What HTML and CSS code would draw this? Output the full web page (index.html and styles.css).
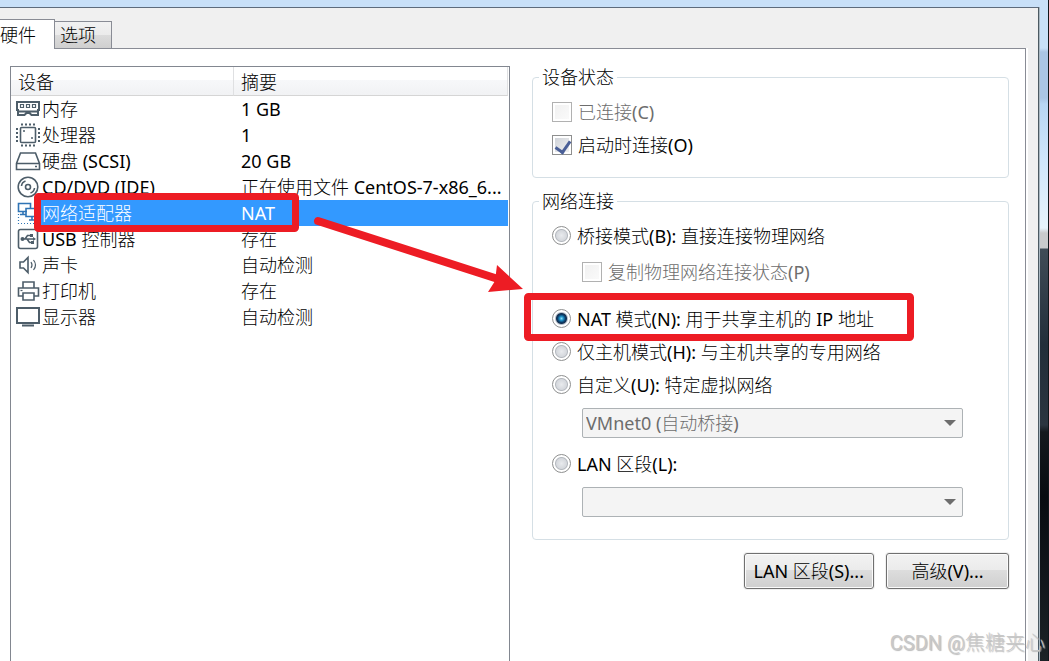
FILE: index.html
```html
<!DOCTYPE html>
<html lang="zh-CN">
<head>
    <meta charset="UTF-8">
    <meta name="viewport" content="width=device-width, initial-scale=1.0">
    <title>虚拟机设置</title>
    <link rel="stylesheet" href="styles.css">
</head>
<body>
    <div class="dialog">
        <div class="tabs" role="tablist">
            <button type="button" class="tab active" role="tab">硬件</button>
            <button type="button" class="tab" role="tab">选项</button>
        </div>

        <div class="panel">
            <div class="device-list">
                <table class="devices">
                    <colgroup>
                        <col class="col-icon">
                        <col class="col-name">
                        <col>
                    </colgroup>
                    <thead>
                        <tr>
                            <th colspan="2">设备</th>
                            <th>摘要</th>
                        </tr>
                    </thead>
                    <tbody>
                        <tr>
                            <td class="icon">
                                <svg width="26" height="26" viewBox="0 0 26 26">
                                    <path d="M2 6h22v8h-1v5h-6.500l-2-2h-3l-2 2H3v-5H2zM3 15.500h20" />
                                    <path class="thin" d="M5.500 8.500h3v3h-3zM11.500 8.500h3v3h-3zM17.500 8.500h3v3h-3z" />
                                </svg>
                            </td>
                            <td>内存</td>
                            <td>1 GB</td>
                        </tr>
                        <tr>
                            <td class="icon">
                                <svg width="26" height="26" viewBox="0 0 26 26">
                                    <rect class="mid" x="5.500" y="5.500" width="15" height="15" rx="1" />
                                    <path stroke-dasharray="2 2" d="M6 2.500h14M6 23.500h14M2 6v14M24 6v14" />
                                    <path class="mid" d="M8 9h2M16 16h2" />
                                </svg>
                            </td>
                            <td>处理器</td>
                            <td>1</td>
                        </tr>
                        <tr>
                            <td class="icon">
                                <svg width="26" height="26" viewBox="0 0 26 26">
                                    <path class="mid" d="M5.500 5h15l4 10.500v6h-23v-6zM1.500 15.500h23M20 18.500h2" />
                                </svg>
                            </td>
                            <td>硬盘 (SCSI)</td>
                            <td>20 GB</td>
                        </tr>
                        <tr>
                            <td class="icon">
                                <svg width="26" height="26" viewBox="0 0 26 26">
                                    <g class="mid">
                                        <circle cx="13" cy="13" r="9.800" />
                                        <circle cx="13" cy="13" r="2.500" />
                                        <path d="M6.500 12a6 6 0 0 1 4-5M19.500 14a6 6 0 0 1-4 5" />
                                    </g>
                                </svg>
                            </td>
                            <td>CD/DVD (IDE)</td>
                            <td>正在使用文件 CentOS-7-x86_6...</td>
                        </tr>
                        <tr class="selected">
                            <td class="icon">
                                <svg class="blue" width="26" height="26" viewBox="0 0 26 26">
                                    <path class="mid" d="M12 11.500H3.500v-8h12V8M5 14.500h6M8 12v2.500M11 8.500h12v8H11zM17 17v3M14 20h7" />
                                    <path class="thin" stroke-dasharray="1 2" d="M3.500 14v9.500h20" />
                                </svg>
                            </td>
                            <td>网络适配器</td>
                            <td>NAT</td>
                        </tr>
                        <tr>
                            <td class="icon">
                                <svg width="26" height="26" viewBox="0 0 26 26">
                                    <g class="mid">
                                        <rect x="3.500" y="3.500" width="19" height="19" rx="2" />
                                        <path d="M7 13h12M10 13l2.500-3.500H16M12 13l2.500 3.500H17" />
                                    </g>
                                    <circle class="fill" cx="7.500" cy="13" r="2" />
                                    <path class="fill" d="M18 11l3 2-3 2zM15 8h3v3h-3zM16 15h3v3h-3z" />
                                </svg>
                            </td>
                            <td>USB 控制器</td>
                            <td>存在</td>
                        </tr>
                        <tr>
                            <td class="icon">
                                <svg width="26" height="26" viewBox="0 0 26 26">
                                    <path class="mid" d="M5 10h3.500l4.500-4.500v15L8.500 16H5z" />
                                    <path class="thin" d="M16 10q2 3 0 6M18.500 8q4 5 0 10" />
                                </svg>
                            </td>
                            <td>声卡</td>
                            <td>自动检测</td>
                        </tr>
                        <tr>
                            <td class="icon">
                                <svg width="26" height="26" viewBox="0 0 26 26">
                                    <path class="mid" d="M8 10V4h11v6M8 18H3.500v-8h20v8H19M8 15h11v7H8z" />
                                    <path class="thin" d="M5.500 12.500h2" />
                                </svg>
                            </td>
                            <td>打印机</td>
                            <td>存在</td>
                        </tr>
                        <tr>
                            <td class="icon">
                                <svg width="26" height="26" viewBox="0 0 26 26">
                                    <path d="M2 4h22v15H2zM7 21.500h12" />
                                </svg>
                            </td>
                            <td>显示器</td>
                            <td>自动检测</td>
                        </tr>
                    </tbody>
                </table>
            </div>

            <form class="settings">
                <fieldset class="status">
                    <legend>设备状态</legend>
                    <label class="option disabled"><input type="checkbox" disabled>已连接(C)</label>
                    <label class="option"><input type="checkbox" checked>启动时连接(O)</label>
                </fieldset>

                <fieldset>
                    <legend>网络连接</legend>
                    <label class="option"><input type="radio" name="network">桥接模式(B): 直接连接物理网络</label>
                    <label class="option nested disabled"><input type="checkbox" disabled>复制物理网络连接状态(P)</label>
                    <label class="option"><input type="radio" name="network" checked>NAT 模式(N): 用于共享主机的 IP 地址</label>
                    <label class="option"><input type="radio" name="network">仅主机模式(H): 与主机共享的专用网络</label>
                    <label class="option"><input type="radio" name="network">自定义(U): 特定虚拟网络</label>
                    <div class="dropdown">
                        <select aria-label="特定虚拟网络" disabled>
                            <option>VMnet0 (自动桥接)</option>
                        </select>
                    </div>
                    <label class="option"><input type="radio" name="network">LAN 区段(L):</label>
                    <div class="dropdown">
                        <select aria-label="LAN 区段" disabled>
                            <option></option>
                        </select>
                    </div>
                </fieldset>

                <div class="actions">
                    <button type="button" class="btn">LAN 区段(S)...</button>
                    <button type="button" class="btn">高级(V)...</button>
                </div>
            </form>
        </div>
    </div>

    <!-- Red highlight boxes and the arrow between them -->
    <svg class="annotation" width="1049" height="661" viewBox="0 0 1049 661">
        <rect x="37.500" y="196.500" width="258" height="32" rx="1" />
        <rect x="527.500" y="296.500" width="383" height="41" rx="1" />
        <path class="shaft" d="M318 221L498 279" />
        <path class="head" d="M497 265l26 24-35 3 7-11z" />
    </svg>
    <div class="watermark">CSDN @焦糖夹心</div>
</body>
</html>
```

FILE: styles.css
```css
* {
    box-sizing: border-box;
}
body {
    margin: 0;
    min-height: 100vh;
    display: flex;
    position: relative;
    overflow: hidden;
    padding: 7px 9px 0 0;
    font-family: "Noto Sans", "Noto Sans CJK SC Light", "Noto Sans CJK SC", sans-serif;
    font-size: 18px;
    line-height: 26px;
    color: #000;
    border-right: 1px solid #10151a;
    background: linear-gradient(#c8e0f8 0, #c8e0f8 48px, #aac5e5 52px, #aac5e5 98px, #b8d6f3 104px, #cfe6fc 160px, #e8f3fc 228px, #c9cacc 233px, #c9cacc 248px, #404c57 249px, #222e3a 345px, #2b3540 425px, #14191e 432px, #070b10 497px, #1c2226 661px);
}
button, select, input {
    font: inherit;
    color: inherit;
    margin: 0;
}

/* Dialog and tabs */
.dialog {
    flex: 1;
    display: flex;
    flex-direction: column;
    background-color: #f0f0f0;
    border-top: 1px solid #5d6b7c;
    border-right: 1px solid #4c5a62;
    box-shadow: 1px 0 0 #a9b8c2;
    padding: 11px 12px 0 0;
}
.tabs {
    display: flex;
    align-items: flex-end;
    height: 30px;
    margin-bottom: -1px;
}
.tab {
    border: 1px solid #898c95;
    border-left: none;
    height: 28px;
    padding: 0 15px 0 5px;
    background: linear-gradient(#f2f2f2 0, #ebebeb 50%, #dcdcdc 50%, #cfcfcf 100%);
}
.tab.active {
    position: relative;
    z-index: 1;
    height: 30px;
    padding: 0 18px 0 0;
    background: #fff;
    border-bottom: none;
}

/* Panel */
.panel {
    flex: 1;
    display: grid;
    grid-template-columns: 500fr 477fr;
    gap: 22px;
    background-color: #fff;
    border-top: 1px solid #898c95;
    border-right: 1px solid #898c95;
    box-shadow: 2px 0 0 #fff;
    padding: 17px 16px 0 10px;
}
.device-list {
    border: 1px solid #828790;
    border-bottom: none;
    padding-right: 1px;
}
.devices {
    width: 100%;
    table-layout: fixed;
    border-collapse: separate;
    border-spacing: 0;
}
.col-icon {
    width: 30px;
}
.col-name {
    width: 193px;
}
.devices th {
    height: 29px;
    padding: 2px 7px 0;
    font-weight: normal;
    text-align: left;
    border-right: 1px solid #dfe0e2;
    border-bottom: 1px solid #d5d5d5;
    background: linear-gradient(#fff 0, #fff 45%, #f7f8fa 45%, #f1f2f4 100%);
}
.devices td {
    height: 26px;
    padding: 0 0 0 7px;
    white-space: nowrap;
}
.devices td:nth-child(2) {
    padding-left: 1px;
}
.devices td.icon {
    padding: 0 0 0 4px;
    background-color: #fff;
}
.selected td {
    background-color: #3399ff;
    color: #fff;
}
.icon svg {
    display: block;
    fill: none;
    stroke: #4d5d69;
    stroke-width: 2;
}
.icon svg.blue {
    stroke: #2f74b5;
}
.icon .mid {
    stroke-width: 1.6;
}
.icon .thin {
    stroke-width: 1.2;
}
.icon .fill {
    fill: #4d5d69;
    stroke: none;
}

/* Settings column */
fieldset {
    min-width: 0;
    margin: 0 0 12px;
    border: 1px solid #d5dfe5;
    border-radius: 4px;
    padding: 7px 19px 13px;
}
.status {
    padding-bottom: 16px;
}
legend {
    margin-left: -13px;
    padding: 0 3px;
    line-height: 22px;
}
.option {
    display: flex;
    align-items: center;
    gap: 6px;
    height: 33px;
    white-space: nowrap;
}
.option.nested {
    margin: 3px 0 14px 30px;
}
.disabled {
    color: #6d6d6d;
}
.option input {
    appearance: none;
    flex: none;
    width: 20px;
    height: 20px;
    border: 1px solid #8e8f8f;
    background: linear-gradient(135deg, #cbcfd5, #f6f6f6);
    background-clip: content-box;
    padding: 2px;
}
.option input[type="checkbox"]:disabled {
    border-color: #b1b1b1;
    background-image: linear-gradient(135deg, #f0f0f0, #fbfbfb);
}
.option input[type="radio"] {
    width: 19px;
    height: 19px;
    border-radius: 50%;
    background: radial-gradient(circle, #e9ebee 0, #d5d8dd 5px, #b5b9bf 6px, #fff 7px);
}
.option input[type="radio"]:checked {
    background: radial-gradient(circle, #8fe0fa 0, #1f8fc4 2px, #0b3a66 4px, #173252 5px, #b9c2cc 6px, #fff 7px);
}
.option input[type="checkbox"]:checked::after {
    content: "";
    display: block;
    width: 7px;
    height: 12px;
    margin: 0 0 0 3px;
    border: solid #4a5f97;
    border-width: 0 3px 3px 0;
    transform: rotate(35deg);
}
.dropdown {
    position: relative;
    margin: 7px 26px 9px 30px;
}
.dropdown select {
    appearance: none;
    display: block;
    width: 100%;
    height: 30px;
    padding: 0 28px 0 3px;
    line-height: 26px;
    border: 1px solid #adb2b5;
    border-radius: 2px;
    background-color: #f4f4f4;
    color: #6d6d6d;
    opacity: 1;
}
.dropdown::after {
    content: "";
    position: absolute;
    top: 12px;
    right: 7px;
    border: solid transparent;
    border-width: 6px 6px 0;
    border-top-color: #6d6d6d;
}
.actions {
    display: flex;
    justify-content: flex-end;
    gap: 12px;
    padding-top: 1px;
}
.btn {
    height: 36px;
    min-width: 123px;
    padding: 0 9px;
    border: 1px solid #707070;
    border-radius: 3px;
    box-shadow: inset 0 0 0 1px #fbfbfb, 0 0 0 1px #f0f0f0;
    background: linear-gradient(#f2f2f2 0, #ebebeb 48%, #dddddd 48%, #cfcfcf 100%);
}

/* Overlays */
.annotation {
    position: absolute;
    top: 0;
    left: 0;
    z-index: 2;
    pointer-events: none;
    fill: none;
    stroke: #ed1c24;
    stroke-width: 7;
}
.annotation .shaft {
    stroke-width: 8;
    stroke-linecap: round;
}
.annotation .head {
    fill: #ed1c24;
    stroke: none;
}
.watermark {
    position: absolute;
    right: 3px;
    bottom: 5px;
    z-index: 3;
    font-family: Roboto, "Noto Sans CJK SC Light", "Noto Sans CJK SC", sans-serif;
    font-size: 20px;
    line-height: 26px;
    color: #c8c8c8;
    text-shadow: 1px 1px 1px #bbb;
}
```
